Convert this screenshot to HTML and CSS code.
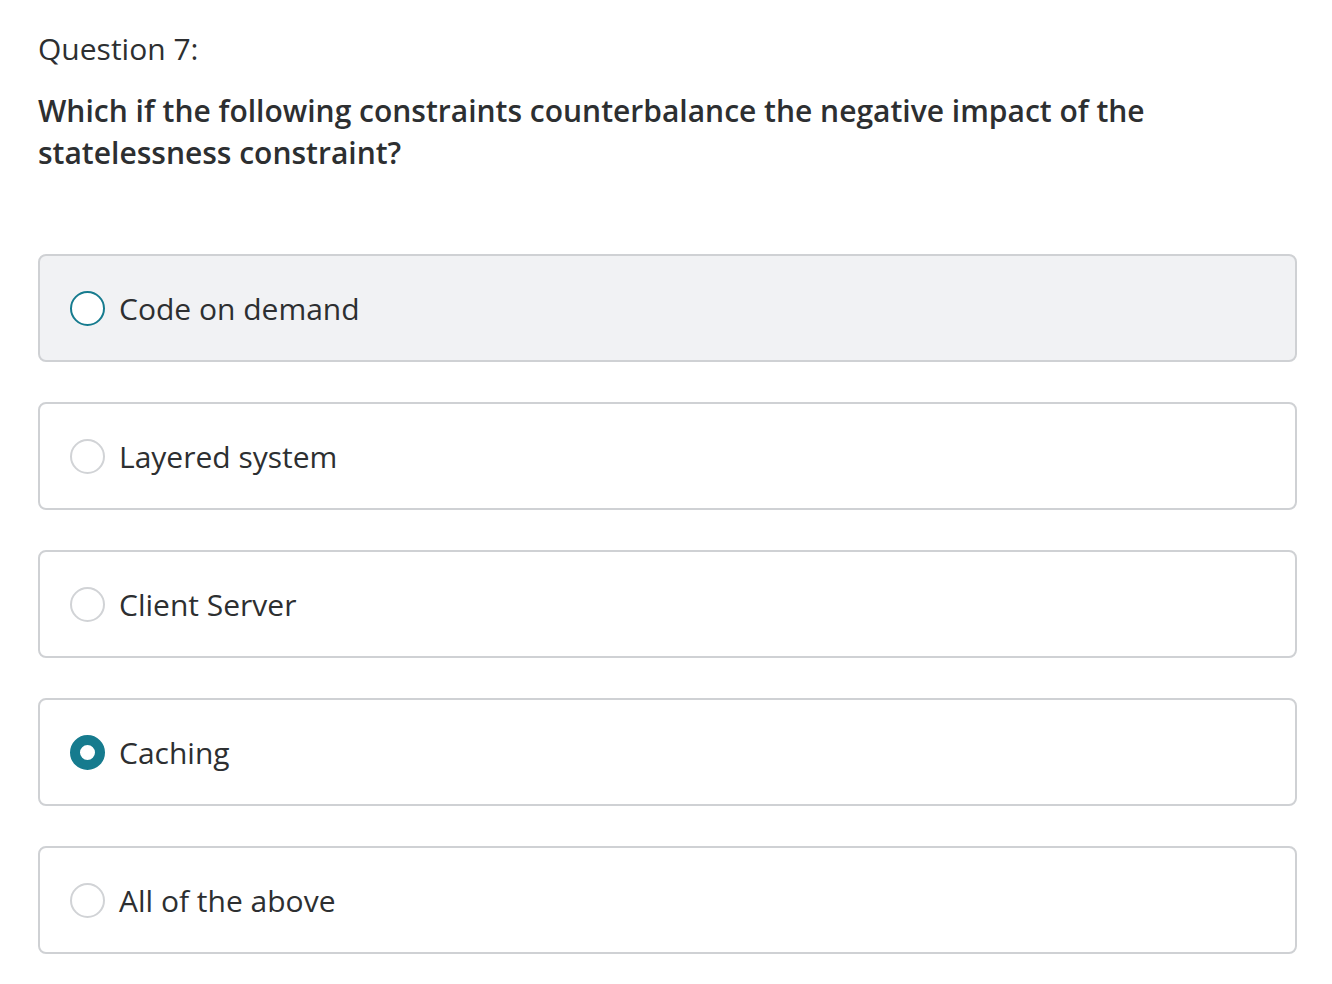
FILE: index.html
```html
<!DOCTYPE html>
<html lang="en">
<head>
<meta charset="utf-8">
<title>Question 7</title>
<link rel="stylesheet" href="styles.css">
</head>
<body>
<div class="quiz">
  <div class="q-label">Question 7:</div>
  <div class="q-text">Which if the following constraints counterbalance the negative impact of the statelessness constraint?</div>
  <ul class="options">
    <li class="option hover"><span class="radio focus"></span><span class="opt-text">Code on demand</span></li>
    <li class="option"><span class="radio"></span><span class="opt-text">Layered system</span></li>
    <li class="option"><span class="radio"></span><span class="opt-text">Client Server</span></li>
    <li class="option"><span class="radio checked"></span><span class="opt-text">Caching</span></li>
    <li class="option"><span class="radio"></span><span class="opt-text">All of the above</span></li>
  </ul>
</div>
</body>
</html>
```

FILE: styles.css
```css
html, body {
  margin: 0;
  padding: 0;
  background: #ffffff;
}
body {
  font-family: "Open Sans", "Noto Sans", sans-serif;
  color: #2d2f31;
}
.quiz {
  padding: 28px 35px 0 38px;
}
.q-label {
  font-size: 30px;
  line-height: 42px;
  font-weight: 400;
}
.q-text {
  margin-top: 20px;
  font-size: 30px;
  line-height: 42px;
  font-weight: 600;
  max-width: 1180px;
}
.options {
  list-style: none;
  margin: 80px 0 0 0;
  padding: 0;
  display: flex;
  flex-direction: column;
  gap: 40px;
}
.option {
  box-sizing: border-box;
  height: 108px;
  border: 2px solid #cfd1d4;
  border-radius: 8px;
  background: #ffffff;
  display: flex;
  align-items: center;
  padding-left: 30px;
  gap: 14px;
}
.option.hover {
  background: #f1f2f4;
}
.radio {
  box-sizing: border-box;
  width: 35px;
  height: 35px;
  border-radius: 50%;
  border: 2px solid #d1d3d6;
  background: #ffffff;
  flex: none;
}
.radio.focus {
  border-color: #167b8e;
}
.radio.checked {
  border: 10.5px solid #167b8e;
}
.opt-text {
  font-size: 30px;
  line-height: 42px;
  padding-top: 2px;
}
```
